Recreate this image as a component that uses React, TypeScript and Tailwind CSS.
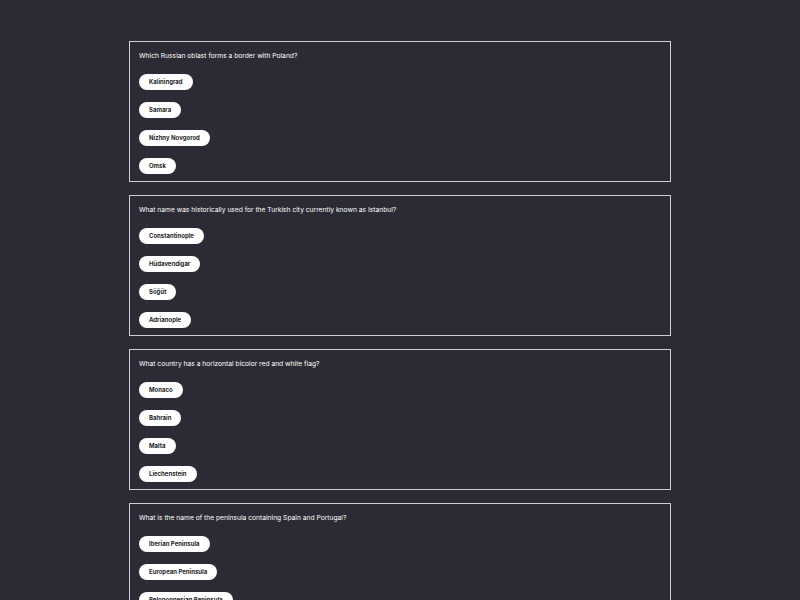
const questions = [
  {
    q: 'Which Russian oblast forms a border with Poland?',
    answers: ['Kaliningrad', 'Samara', 'Nizhny Novgorod', 'Omsk'],
  },
  {
    q: 'What name was historically used for the Turkish city currently known as Istanbul?',
    answers: ['Constantinople', 'Hüdavendigar', 'Söğüt', 'Adrianople'],
  },
  {
    q: 'What country has a horizontal bicolor red and white flag?',
    answers: ['Monaco', 'Bahrain', 'Malta', 'Liechenstein'],
  },
  {
    q: 'What is the name of the peninsula containing Spain and Portugal?',
    answers: ['Iberian Peninsula', 'European Peninsula', 'Peloponnesian Peninsula', 'Scandinavian Peninsula'],
  },
];

export default function App() {
  return (
    <div className="min-h-screen bg-[#2b2a35] pt-[41px] pb-10 font-['Inter',sans-serif]">
      <div className="mx-auto flex w-[542px] flex-col gap-[13px]">
        {questions.map((item) => (
          <div key={item.q} className="h-[141px] border border-[#cfced6] px-[9px] pt-[9px]">
            <p className="text-[6.7px] leading-[10px] text-white">{item.q}</p>
            <div className="mt-[13px] flex flex-col items-start gap-[12px]">
              {item.answers.map((a) => (
                <button
                  key={a}
                  className="h-4 rounded-full bg-white px-[10px] text-[6px] font-bold leading-4 text-[#1f1e26]"
                >
                  {a}
                </button>
              ))}
            </div>
          </div>
        ))}
      </div>
    </div>
  );
}
